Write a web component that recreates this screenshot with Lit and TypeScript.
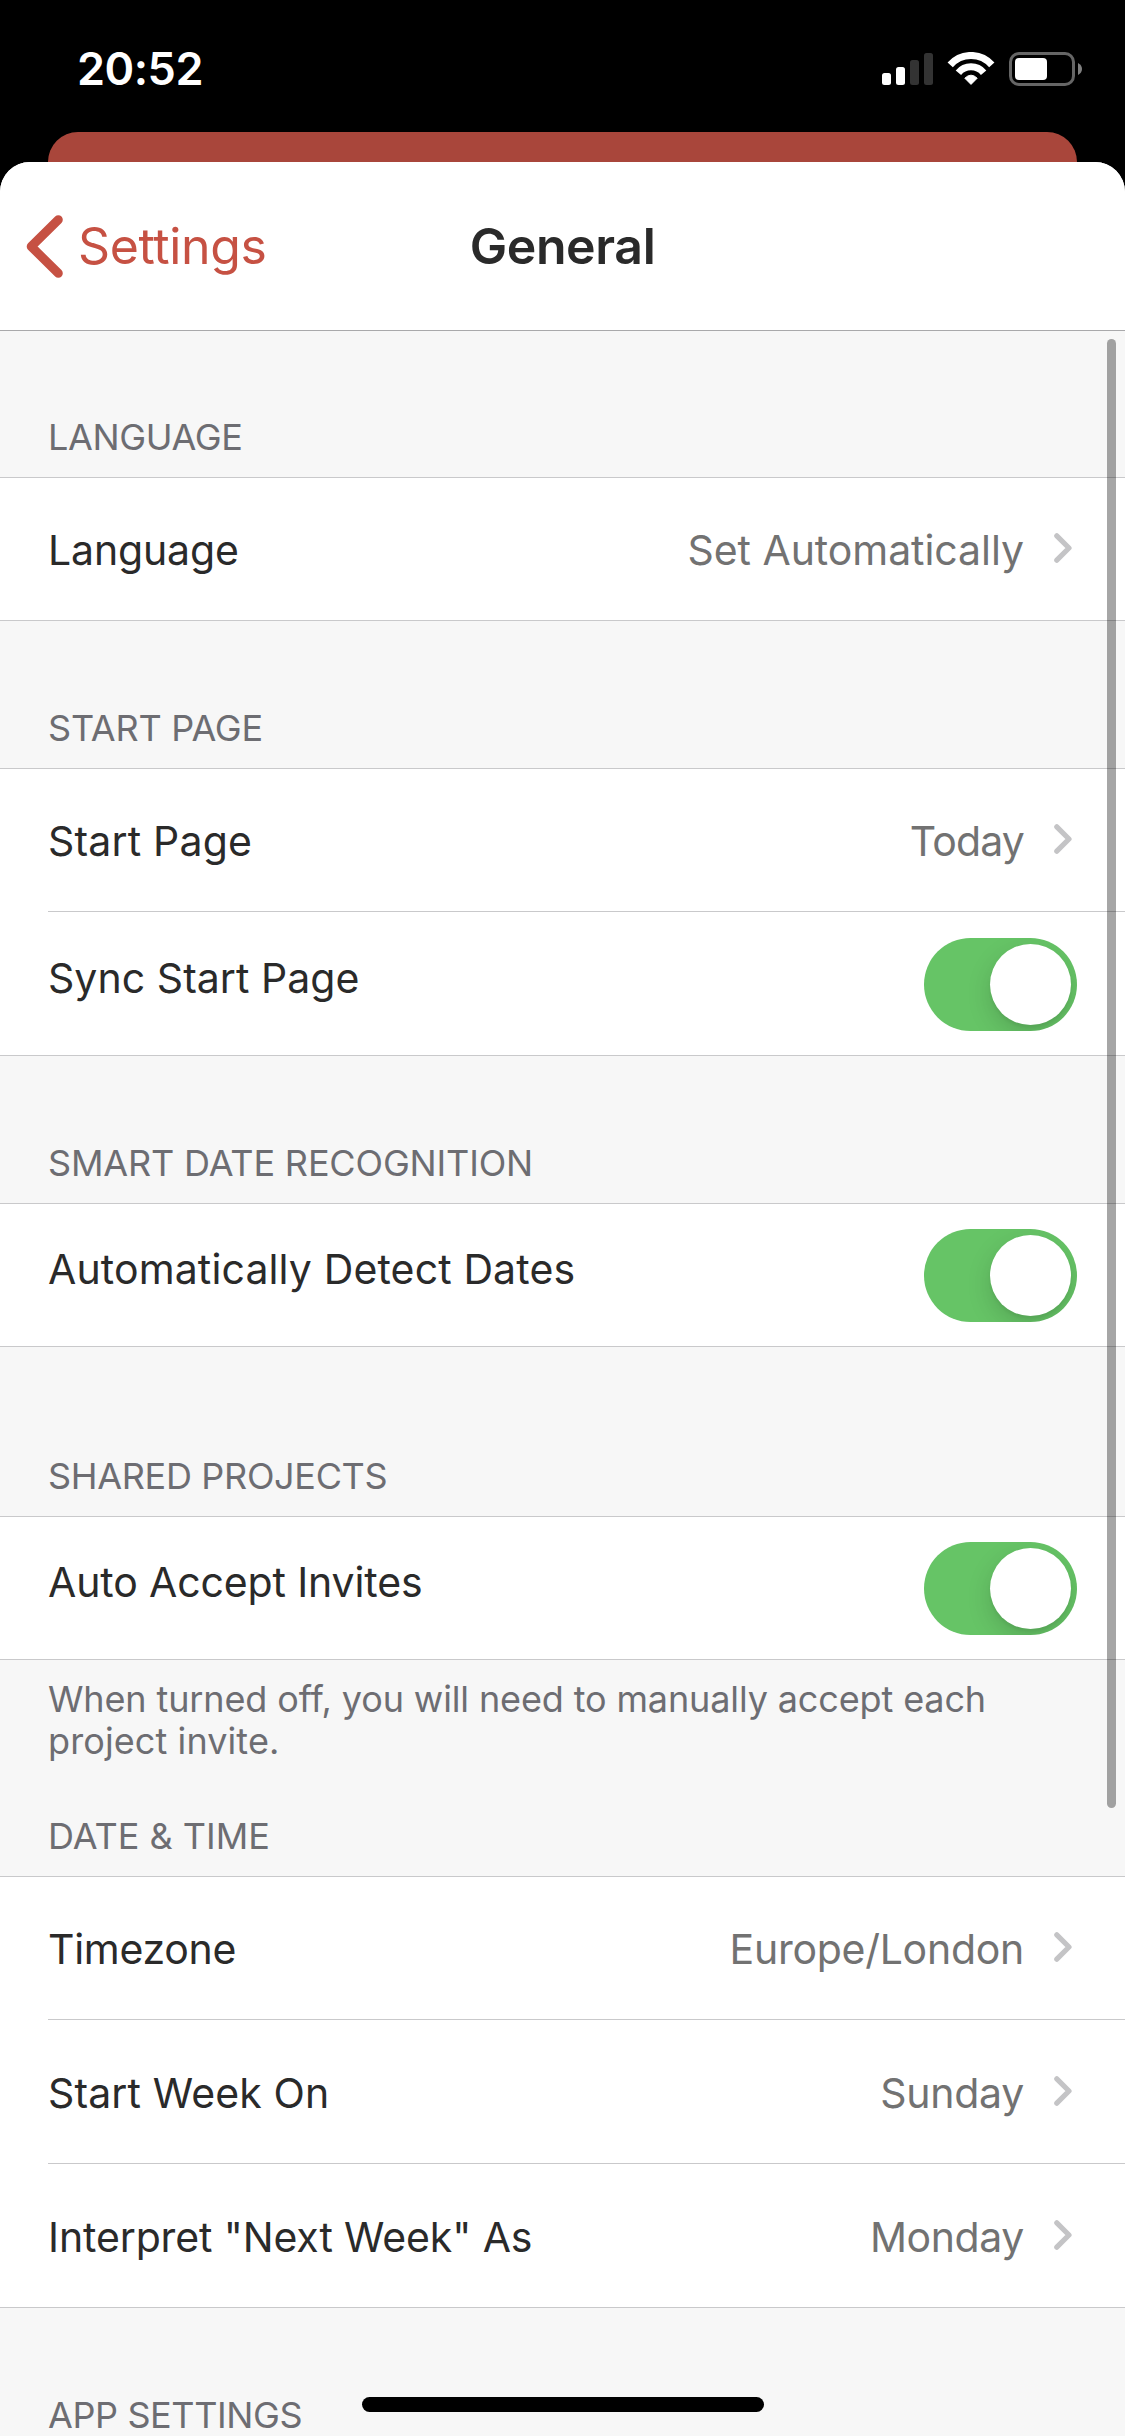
import { LitElement, html, css, nothing } from "lit";
import { customElement, property } from "lit/decorators.js";
import { classMap } from "lit/directives/class-map.js";
import { styleMap } from "lit/directives/style-map.js";

/** A piece of text with its letter tracking in pixels. */
interface Label {
  text: string;
  track: number;
}

interface Row {
  label: Label;
  value?: Label;
  on?: boolean;
  tall?: boolean;
}

interface Section {
  title: Label;
  space: "first" | "normal" | "wide" | "tight";
  rows: Row[];
  note?: Label[];
}

const t = (text: string, track = 0): Label => ({ text, track });

const SECTIONS: Section[] = [
  {
    title: t("LANGUAGE", -0.35),
    space: "first",
    rows: [{ label: t("Language", -0.14), value: t("Set Automatically", -0.06) }],
  },
  {
    title: t("START PAGE", -0.22),
    space: "normal",
    rows: [
      { label: t("Start Page", 0.19), value: t("Today", -0.84) },
      { label: t("Sync Start Page", 0.05), on: true, tall: true },
    ],
  },
  {
    title: t("SMART DATE RECOGNITION", -0.15),
    space: "normal",
    rows: [{ label: t("Automatically Detect Dates", 0.13), on: true }],
  },
  {
    title: t("SHARED PROJECTS", -0.32),
    space: "wide",
    rows: [{ label: t("Auto Accept Invites", -0.13), on: true }],
    note: [
      t("When turned off, you will need to manually accept each ", -0.13),
      t("project invite.", 0.1),
    ],
  },
  {
    title: t("DATE & TIME", 0),
    space: "tight",
    rows: [
      { label: t("Timezone", -0.28), value: t("Europe/London", -0.27) },
      { label: t("Start Week On", 0.13), value: t("Sunday", -0.26), tall: true },
      { label: t('Interpret "Next Week" As', -0.12), value: t("Monday", -0.39), tall: true },
    ],
  },
  { title: t("APP SETTINGS", -0.39), space: "normal", rows: [] },
];

const tracked = (l: Label) =>
  html`<span style=${styleMap({ letterSpacing: `${l.track}px` })}>${l.text}</span>`;

@customElement("status-bar")
export class StatusBar extends LitElement {
  static styles = css`
    :host {
      display: flex;
      justify-content: space-between;
      align-items: flex-start;
      height: 132px;
      box-sizing: border-box;
      padding: 42px 43px 0 77px;
      color: #fff;
    }
    .time {
      font-size: 45px;
      line-height: 54px;
      font-weight: 600;
      letter-spacing: -0.49px;
    }
    .icons {
      display: block;
      margin-top: 10px;
    }
  `;
  render() {
    return html`
      <div class="time">20:52</div>
      <svg class="icons" width="200" height="34" viewBox="882 52 200 34" fill="#fff">
        <rect x="882" y="73" width="9" height="12" rx="2.5" />
        <rect x="896" y="67" width="9" height="18" rx="2.5" />
        <rect x="910" y="60" width="9" height="25" rx="2.5" fill="#333" />
        <rect x="924" y="53" width="9" height="32" rx="2.5" fill="#333" />
        <g fill="none" stroke="#fff" stroke-width="7">
          <path d="M950.2 64.9A27.6 27.6 0 0 1 991.8 64.9" />
          <path d="M958.4 72.7A16.4 16.4 0 0 1 983.6 72.7" />
        </g>
        <path
          d="M964.8 78.2Q971 72.2 977.2 78.2L971 84.4Z"
          stroke="#fff"
          stroke-width="1"
          stroke-linejoin="round"
        />
        <rect x="1010.5" y="53.5" width="63" height="31" rx="8.5" fill="none" stroke="#666" stroke-width="3" />
        <rect x="1015" y="58" width="32" height="22" rx="4" />
        <path d="M1078 63Q1082 65.2 1082 69Q1082 72.8 1078 75Z" fill="#808080" />
      </svg>
    `;
  }
}

@customElement("toggle-switch")
export class ToggleSwitch extends LitElement {
  @property({ type: Boolean }) on = false;
  static styles = css`
    .track {
      display: flex;
      width: 153px;
      height: 93px;
      padding: 6px;
      box-sizing: border-box;
      border-radius: 46.5px;
      background: #e5e5ea;
      overflow: hidden;
    }
    .track.on {
      justify-content: flex-end;
      background: #66c466;
    }
    .knob {
      width: 81px;
      height: 81px;
      border-radius: 50%;
      background: #fff;
      box-shadow: 0 9px 24px rgba(0, 0, 0, 0.15), 0 3px 3px rgba(0, 0, 0, 0.05);
    }
  `;
  render() {
    return html`<div class=${classMap({ track: true, on: this.on })}><div class="knob"></div></div>`;
  }
}

@customElement("settings-section")
export class SettingsSection extends LitElement {
  @property({ attribute: false }) section!: Section;
  static styles = css`
    :host {
      display: block;
    }
    .title {
      display: flex;
      align-items: flex-end;
      box-sizing: border-box;
      padding: 0 48px 22px;
      font-size: 36px;
      line-height: 36px;
      color: #6d6d72;
      white-space: nowrap;
    }
    .first {
      height: 146px;
    }
    .normal {
      height: 147px;
    }
    .wide {
      height: 169px;
    }
    .tight {
      height: 114px;
    }
    .group {
      background: #fff;
      border-top: 1px solid #c9c9cb;
      border-bottom: 1px solid #c9c9cb;
    }
    .row {
      display: flex;
      align-items: center;
      justify-content: space-between;
      box-sizing: border-box;
      height: 142px;
      margin-left: 48px;
      padding-right: 53px;
      font-size: 41px;
      line-height: 50px;
      color: #2a2a2a;
      white-space: nowrap;
    }
    .row + .row {
      height: 143px;
      border-top: 1px solid #c9c9cb;
    }
    .row.tall {
      height: 144px;
    }
    .row.switch {
      padding-right: 48px;
    }
    .label {
      padding-top: 2px;
    }
    .switch .label {
      padding: 0 0 12px;
    }
    .switch toggle-switch {
      padding-top: 1px;
    }
    .detail {
      display: flex;
      align-items: center;
      gap: 30px;
    }
    .value {
      padding-top: 2px;
      color: #727272;
    }
    .arrow {
      display: block;
      margin-bottom: 2px;
    }
    .note {
      padding: 18px 48px 0;
      font-size: 36px;
      line-height: 42px;
      color: #6d6d72;
    }
  `;
  private row(r: Row) {
    const isSwitch = r.on !== undefined;
    return html`
      <div class=${classMap({ row: true, tall: !!r.tall, switch: isSwitch })}>
        <div class="label">${tracked(r.label)}</div>
        ${isSwitch
          ? html`<toggle-switch ?on=${r.on}></toggle-switch>`
          : html`<div class="detail">
              <div class="value">${tracked(r.value!)}</div>
              <svg class="arrow" width="18" height="30" viewBox="0 0 18 30">
                <path
                  d="M2.8 2.8L15 15L2.8 27.2"
                  fill="none"
                  stroke="#c4c4c6"
                  stroke-width="5.2"
                  stroke-linecap="round"
                  stroke-linejoin="round"
                />
              </svg>
            </div>`}
      </div>
    `;
  }
  render() {
    const s = this.section;
    return html`
      <div class="title ${s.space}">${tracked(s.title)}</div>
      ${s.rows.length ? html`<div class="group">${s.rows.map((r) => this.row(r))}</div>` : nothing}
      ${s.note ? html`<div class="note">${s.note.map(tracked)}</div>` : nothing}
    `;
  }
}

@customElement("app-root")
export class AppRoot extends LitElement {
  static styles = css`
    :host {
      display: block;
      position: relative;
      width: 1125px;
      height: 2436px;
      overflow: hidden;
      background: #000;
      font-family: Inter, "Liberation Sans", sans-serif;
    }
    .backdrop {
      height: 30px;
      margin: 0 48px;
      border-radius: 30px 30px 0 0;
      background: #a9463b;
    }
    .sheet {
      height: 2274px;
      border-radius: 30px 30px 0 0;
      background: #f7f7f7;
      overflow: hidden;
    }
    .nav {
      display: grid;
      grid-template-columns: 1fr auto 1fr;
      align-items: center;
      height: 168px;
      background: #fff;
      border-bottom: 1px solid #a9a9ab;
      font-size: 50px;
      line-height: 60px;
    }
    .back {
      display: flex;
      align-items: center;
      gap: 15px;
      padding-left: 26px;
      color: #c65143;
      letter-spacing: -0.36px;
    }
    .back svg {
      display: block;
      margin-top: 1px;
    }
    .heading {
      font-weight: 600;
      color: #2a2a2a;
      letter-spacing: -0.38px;
    }
    .scrollbar {
      position: absolute;
      top: 339px;
      right: 9px;
      width: 9px;
      height: 1469px;
      border-radius: 4.5px;
      background: rgba(0, 0, 0, 0.35);
    }
    .home {
      position: absolute;
      left: 362px;
      bottom: 24px;
      width: 402px;
      height: 15px;
      border-radius: 7.5px;
      background: #000;
    }
  `;
  render() {
    return html`
      <status-bar></status-bar>
      <div class="backdrop"></div>
      <div class="sheet">
        <div class="nav">
          <div class="back">
            <svg width="37" height="63" viewBox="0 0 37 63">
              <path
                d="M32.3 4.7L5.2 31.5L32.3 58.3"
                fill="none"
                stroke="currentColor"
                stroke-width="9"
                stroke-linecap="round"
                stroke-linejoin="round"
              />
            </svg>
            <span>Settings</span>
          </div>
          <div class="heading">General</div>
        </div>
        ${SECTIONS.map((s) => html`<settings-section .section=${s}></settings-section>`)}
      </div>
      <div class="scrollbar"></div>
      <div class="home"></div>
    `;
  }
}
